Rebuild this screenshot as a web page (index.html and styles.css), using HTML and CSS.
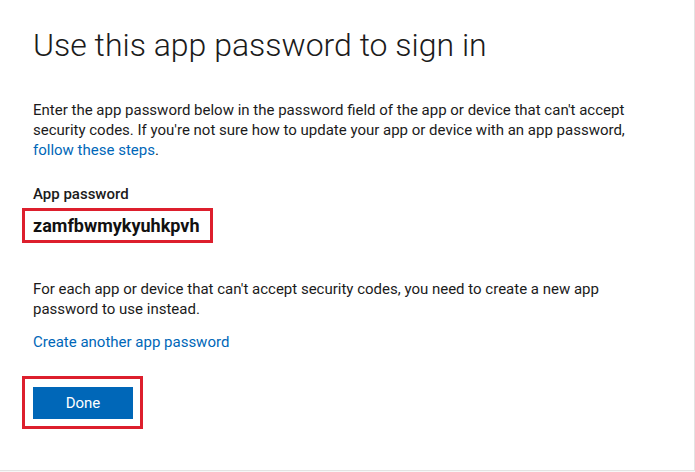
FILE: index.html
```html
<!DOCTYPE html>
<html lang="en">
<head>
<meta charset="utf-8">
<title>Use this app password to sign in</title>
<link rel="stylesheet" href="styles.css">
</head>
<body>
<main class="card">
  <h1 class="title">Use this app password to sign in</h1>
  <p class="intro">Enter the app password below in the password field of the app or device that can't accept security codes. If you're not sure how to update your app or device with an app password, <a class="link" href="#">follow these steps</a>.</p>
  <div class="label">App password</div>
  <div class="pw-box"><span class="pw">zamfbwmykyuhkpvh</span></div>
  <p class="note">For each app or device that can't accept security codes, you need to create a new app password to use instead.</p>
  <a class="link create" href="#">Create another app password</a>
  <div class="done-box"><button class="done" type="button">Done</button></div>
</main>
</body>
</html>
```
FILE: styles.css
```css
html{background:#f7f7f7}
body{margin:0;font-family:Roboto,"Segoe UI",sans-serif;font-size:15px;line-height:20px;color:#1b1b1b}
.card{box-sizing:border-box;width:695px;height:471px;background:#fff;border-right:1px solid #e3e3e3;border-bottom:1px solid #e3e3e3;padding:25px 0 0 33px;display:flex;flex-direction:column;align-items:flex-start}
.title{margin:0;font-size:32px;line-height:40px;font-weight:300;color:#1b1b1b}
.intro{margin:35px 0 0;width:610px}
.link{color:#0067b8;text-decoration:none}
.label{margin-top:24px;font-weight:500}
.pw-box{margin:4px 0 0 -11px;border:3px solid #dd1f2d;padding:2px 10px 2px 8px}
.pw{display:block;font-size:18px;line-height:25px;font-weight:700;color:#111}
.note{margin:36px 0 0;width:610px}
.create{display:block;margin-top:13px}
.done-box{margin:24px 0 0 -11px;border:3px solid #dd1f2d;padding:8px 7px 7px 8px}
.done{display:block;width:100px;height:32px;border:0;padding:0;background:#0067b8;color:#fff;font-family:Roboto,"Segoe UI",sans-serif;font-size:15px;line-height:32px;cursor:pointer}
```
